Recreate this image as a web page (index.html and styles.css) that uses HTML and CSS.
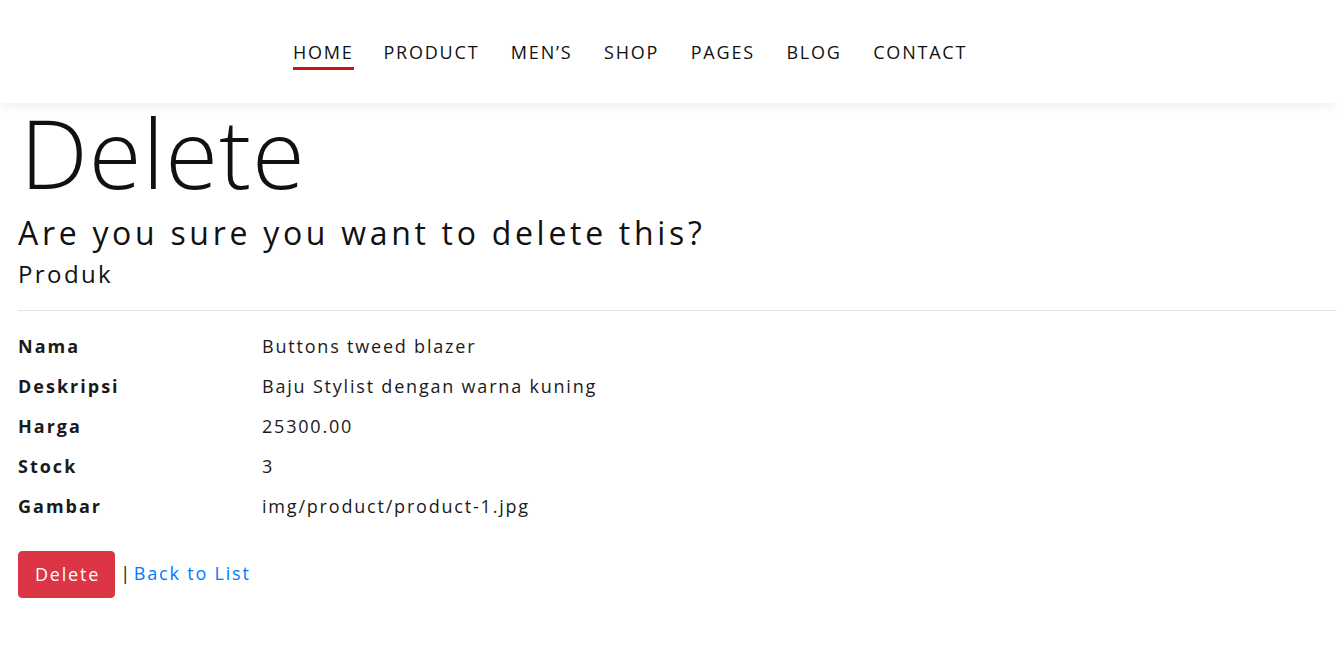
FILE: index.html
```html
<!DOCTYPE html>
<html lang="en">
<head>
<meta charset="utf-8">
<title>Delete</title>
<link rel="stylesheet" href="styles.css">
</head>
<body>
<header class="site-header">
  <nav class="main-nav">
    <a class="nav-link active" href="#">HOME</a>
    <a class="nav-link" href="#">PRODUCT</a>
    <a class="nav-link" href="#">MEN’S</a>
    <a class="nav-link" href="#">SHOP</a>
    <a class="nav-link" href="#">PAGES</a>
    <a class="nav-link" href="#">BLOG</a>
    <a class="nav-link" href="#">CONTACT</a>
  </nav>
</header>
<main class="content">
  <h1 class="title">Delete</h1>
  <h3 class="question">Are you sure you want to delete this?</h3>
  <div class="record">
    <h4 class="record-name">Produk</h4>
    <hr class="divider">
    <dl class="details">
      <dt>Nama</dt><dd>Buttons tweed blazer</dd>
      <dt>Deskripsi</dt><dd>Baju Stylist dengan warna kuning</dd>
      <dt>Harga</dt><dd>25300.00</dd>
      <dt>Stock</dt><dd>3</dd>
      <dt>Gambar</dt><dd>img/product/product-1.jpg</dd>
    </dl>
    <form class="actions">
      <button type="button" class="btn-danger">Delete</button>
      <span class="sep">|</span>
      <a class="back-link" href="#">Back to List</a>
    </form>
  </div>
</main>
</body>
</html>
```

FILE: styles.css
```css
html, body {
  margin: 0;
  padding: 0;
  background: #fff;
}
body {
  font-family: "Open Sans", "DejaVu Sans", sans-serif;
  color: #111111;
  overflow-x: hidden;
}
.site-header {
  height: 103px;
  background: #fff;
  box-shadow: 0 2px 12px rgba(0, 0, 0, 0.08);
  position: relative;
  z-index: 1;
  display: flex;
  align-items: flex-start;
}
.main-nav {
  display: flex;
  gap: 31.5px;
  margin-left: 293px;
  padding-top: 40px;
}
.nav-link {
  font-size: 18px;
  line-height: 25px;
  letter-spacing: 1.8px;
  color: #111111;
  text-decoration: none;
  padding-bottom: 2px;
  border-bottom: 3px solid transparent;
}
.nav-link.active {
  border-bottom-color: #ca1515;
  margin-right: -1.8px;
}
.content {
  padding-left: 18px;
}
.title {
  margin: 1px 0 0 2px;
  font-size: 96px;
  line-height: 96px;
  font-weight: 300;
  letter-spacing: 1px;
  color: #111111;
}
.question {
  margin: 14px 0 0;
  font-size: 32px;
  line-height: 38px;
  font-weight: 400;
  letter-spacing: 3.7px;
}
.record-name {
  margin: 7px 0 0;
  font-size: 24px;
  line-height: 29px;
  font-weight: 400;
  letter-spacing: 2.4px;
}
.divider {
  margin: 22px 0 15px;
  border: 0;
  border-top: 1px solid #e5e5e5;
}
.details {
  display: grid;
  grid-template-columns: 244px 1fr;
  margin: 0;
  font-size: 18px;
  line-height: 40px;
  letter-spacing: 1.8px;
}
.details dt {
  font-weight: 700;
  letter-spacing: 2px;
  color: #1a1a1a;
}
.details dd {
  margin: 0;
  color: #1a1a1a;
}
.actions {
  margin-top: 25px;
  display: flex;
  align-items: center;
  font-size: 18px;
  letter-spacing: 1.8px;
}
.btn-danger {
  font-family: inherit;
  font-size: 18px;
  letter-spacing: 1.8px;
  line-height: 27px;
  padding: 9px 14px 9px 16px;
  background: #dc3545;
  color: #fff;
  border: 1px solid #dc3545;
  border-radius: 4px;
}
.sep {
  margin: 0 2px 0 5px;
  color: #111;
  position: relative;
  top: -2px;
}
.back-link {
  color: #007bff;
  text-decoration: none;
  position: relative;
  top: -2px;
}
```
